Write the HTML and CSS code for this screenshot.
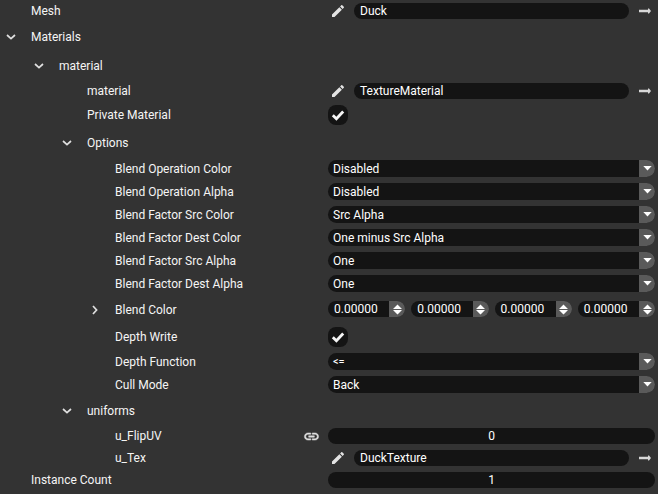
FILE: index.html
```html
<!DOCTYPE html>
<html lang="en">
<head>
<meta charset="utf-8">
<title>Inspector</title>
<link rel="stylesheet" href="styles.css">
</head>
<body>
<svg class="defs" width="0" height="0" aria-hidden="true">
  <symbol id="i-edit" viewBox="0 0 24 24"><path d="M3 17.25V21h3.75L17.81 9.94l-3.75-3.75L3 17.25zM20.71 7.04c.39-.39.39-1.02 0-1.41l-2.34-2.34c-.39-.39-1.02-.39-1.41 0l-1.83 1.83 3.75 3.75 1.83-1.83z"/></symbol>
  <symbol id="i-link" viewBox="0 0 24 24"><path stroke="currentColor" stroke-width=".7" d="M3.9 12c0-1.71 1.39-3.1 3.1-3.1h4V7H7c-2.76 0-5 2.24-5 5s2.24 5 5 5h4v-1.9H7c-1.71 0-3.1-1.39-3.1-3.1zM8 13h8v-2H8v2zm9-6h-4v1.9h4c1.71 0 3.1 1.39 3.1 3.1s-1.39 3.1-3.1 3.1h-4V17h4c2.76 0 5-2.24 5-5s-2.24-5-5-5z"/></symbol>
  <symbol id="i-down" viewBox="0 0 10 10"><path d="M1 3l4 3.6L9 3" fill="none" stroke="currentColor" stroke-width="1.7"/></symbol>
  <symbol id="i-right" viewBox="0 0 10 10"><path d="M3 1l3.6 4L3 9" fill="none" stroke="currentColor" stroke-width="1.7"/></symbol>
  <symbol id="i-arrow" viewBox="0 0 12 6"><path d="M0 1.800h9V.6h1l2 2.400-2 2.400H9V4.200H0z"/></symbol>
  <symbol id="i-check" viewBox="0 0 20 20"><path d="M4.800 10.300l3.600 3.500 6.800-7.300" fill="none" stroke="currentColor" stroke-width="2.800"/></symbol>
  <symbol id="i-caret" viewBox="0 0 10 6"><path d="M0 0h10L5 5.500z"/></symbol>
  <symbol id="i-spin" viewBox="0 0 10 12"><path d="M0 5.500L5 .5l5 5zM0 6.500h10l-5 5z"/></symbol>
</svg>

<main class="tree">
  <div class="row gap-none">
    <div class="label lv1">Mesh</div>
    <div class="value">
      <svg class="edit"><use href="#i-edit"/></svg>
      <div class="pill">Duck</div>
      <svg class="go"><use href="#i-arrow"/></svg>
    </div>
  </div>

  <div class="row head gap-4">
    <div class="label lv1"><svg class="chev chev-lv1"><use href="#i-down"/></svg>Materials</div>
  </div>
  <div class="row head gap-1">
    <div class="label lv2"><svg class="chev chev-lv2"><use href="#i-down"/></svg>material</div>
  </div>

  <div class="row gap-3">
    <div class="label lv3">material</div>
    <div class="value">
      <svg class="edit"><use href="#i-edit"/></svg>
      <div class="pill">TextureMaterial</div>
      <svg class="go"><use href="#i-arrow"/></svg>
    </div>
  </div>
  <div class="row">
    <div class="label lv3">Private Material</div>
    <div class="value"><div class="check"><svg><use href="#i-check"/></svg></div></div>
  </div>

  <div class="row head gap-4">
    <div class="label lv3"><svg class="chev chev-lv3"><use href="#i-down"/></svg>Options</div>
  </div>

  <div class="row gap-3">
    <div class="label lv4">Blend Operation Color</div>
    <div class="value"><div class="select"><span class="select-text">Disabled</span><span class="select-btn"><svg class="caret"><use href="#i-caret"/></svg></span></div></div>
  </div>
  <div class="row">
    <div class="label lv4">Blend Operation Alpha</div>
    <div class="value"><div class="select"><span class="select-text">Disabled</span><span class="select-btn"><svg class="caret"><use href="#i-caret"/></svg></span></div></div>
  </div>
  <div class="row">
    <div class="label lv4">Blend Factor Src Color</div>
    <div class="value"><div class="select"><span class="select-text">Src Alpha</span><span class="select-btn"><svg class="caret"><use href="#i-caret"/></svg></span></div></div>
  </div>
  <div class="row">
    <div class="label lv4">Blend Factor Dest Color</div>
    <div class="value"><div class="select"><span class="select-text">One minus Src Alpha</span><span class="select-btn"><svg class="caret"><use href="#i-caret"/></svg></span></div></div>
  </div>
  <div class="row">
    <div class="label lv4">Blend Factor Src Alpha</div>
    <div class="value"><div class="select"><span class="select-text">One</span><span class="select-btn"><svg class="caret"><use href="#i-caret"/></svg></span></div></div>
  </div>
  <div class="row">
    <div class="label lv4">Blend Factor Dest Alpha</div>
    <div class="value"><div class="select"><span class="select-text">One</span><span class="select-btn"><svg class="caret"><use href="#i-caret"/></svg></span></div></div>
  </div>

  <div class="row gap-9">
    <div class="label lv4 nudge"><svg class="chev chev-lv4"><use href="#i-right"/></svg>Blend Color</div>
    <div class="value numbers">
      <div class="num"><span class="num-text">0.00000</span><span class="num-btn"><svg class="spin"><use href="#i-spin"/></svg></span></div>
      <div class="num"><span class="num-text">0.00000</span><span class="num-btn"><svg class="spin"><use href="#i-spin"/></svg></span></div>
      <div class="num"><span class="num-text">0.00000</span><span class="num-btn"><svg class="spin"><use href="#i-spin"/></svg></span></div>
      <div class="num"><span class="num-text">0.00000</span><span class="num-btn"><svg class="spin"><use href="#i-spin"/></svg></span></div>
    </div>
  </div>
  <div class="row gap-10">
    <div class="label lv4">Depth Write</div>
    <div class="value"><div class="check"><svg><use href="#i-check"/></svg></div></div>
  </div>
  <div class="row">
    <div class="label lv4">Depth Function</div>
    <div class="value"><div class="select"><span class="select-text select-small">&lt;=</span><span class="select-btn"><svg class="caret"><use href="#i-caret"/></svg></span></div></div>
  </div>
  <div class="row">
    <div class="label lv4">Cull Mode</div>
    <div class="value"><div class="select"><span class="select-text">Back</span><span class="select-btn"><svg class="caret"><use href="#i-caret"/></svg></span></div></div>
  </div>

  <div class="row head gap-4">
    <div class="label lv3"><svg class="chev chev-lv3"><use href="#i-down"/></svg>uniforms</div>
  </div>

  <div class="row gap-3">
    <div class="label lv4">u_FlipUV<svg class="link"><use href="#i-link"/></svg></div>
    <div class="value"><div class="bar">0</div></div>
  </div>
  <div class="row">
    <div class="label lv4">u_Tex</div>
    <div class="value">
      <svg class="edit"><use href="#i-edit"/></svg>
      <div class="pill">DuckTexture</div>
      <svg class="go"><use href="#i-arrow"/></svg>
    </div>
  </div>
  <div class="row">
    <div class="label lv1">Instance Count</div>
    <div class="value"><div class="bar">1</div></div>
  </div>
</main>
</body>
</html>
```

FILE: styles.css
```css
* { box-sizing: border-box; }
html, body { margin: 0; padding: 0; height: 100%; overflow: hidden; }
body {
  background: #333333;
  color: #f5f5f5;
  font: 12px/16px Roboto, "Liberation Sans", sans-serif;
}
.defs { position: absolute; }
svg { display: block; fill: currentColor; }

.tree { padding: 3px 3px 0 0; display: flex; flex-direction: column; }

.row { display: flex; align-items: center; margin-top: 6px; }
.head { height: 28px; }
.gap-none { margin-top: 0; }
.gap-1 { margin-top: 1px; }
.gap-3 { margin-top: 3px; }
.gap-4 { margin-top: 4px; }
.gap-9 { margin-top: 9px; }
.gap-10 { margin-top: 10px; }

.label { width: 328px; flex: none; display: flex; align-items: center; white-space: nowrap; }
.lv1 { padding-left: 31px; }
.lv2 { padding-left: 59px; }
.lv3 { padding-left: 87px; }
.lv4 { padding-left: 115px; }
.nudge { height: 16px; padding-top: 2px; }

.chev { width: 10px; height: 10px; margin-left: -25px; margin-right: 15px; color: #e0e0e0; }

.value { width: 327px; flex: none; display: flex; align-items: center; }
.numbers { gap: 6px; }

.edit { width: 16px; height: 16px; margin-left: 2px; margin-right: 8px; color: #e4e4e4; flex: none; }
.go { width: 12px; height: 6px; margin-left: 10px; color: #d8d8d8; flex: none; }
.link { width: 17px; height: 17px; margin: -1px 8px -1px auto; color: #e0e0e0; flex: none; }

.pill {
  width: 275px; height: 16px; flex: none;
  background: #141414; border-radius: 8px;
  padding-left: 6px; color: #fff; line-height: 16px;
}
.bar {
  width: 100%; height: 16px;
  background: #141414; border-radius: 8px;
  text-align: center; color: #fff; line-height: 16px;
}
.check {
  width: 20px; height: 20px;
  background: #141414; border-radius: 8px; color: #f5f5f5;
}
.check svg { width: 20px; height: 20px; }

.select {
  width: 100%; height: 17px;
  display: flex; background: #141414; border-radius: 8.5px; overflow: hidden;
}
.select-text { flex: 1; padding-left: 5px; color: #fff; line-height: 18px; }
.select-small { font-size: 11px; }
.select-btn {
  width: 16px; flex: none; background: #5a5a5a;
  display: flex; align-items: center; justify-content: center;
}
.caret { width: 9px; height: 5px; color: #fff; }

.num {
  flex: 1 1 0; height: 16px; display: flex;
  background: #141414; border-radius: 8px; overflow: hidden;
}
.num-text { flex: 1; padding-left: 6px; color: #fff; line-height: 17px; }
.num-btn {
  width: 16px; flex: none; background: #5a5a5a;
  display: flex; align-items: center; justify-content: center;
}
.spin { width: 9px; height: 11px; color: #fff; }
```
